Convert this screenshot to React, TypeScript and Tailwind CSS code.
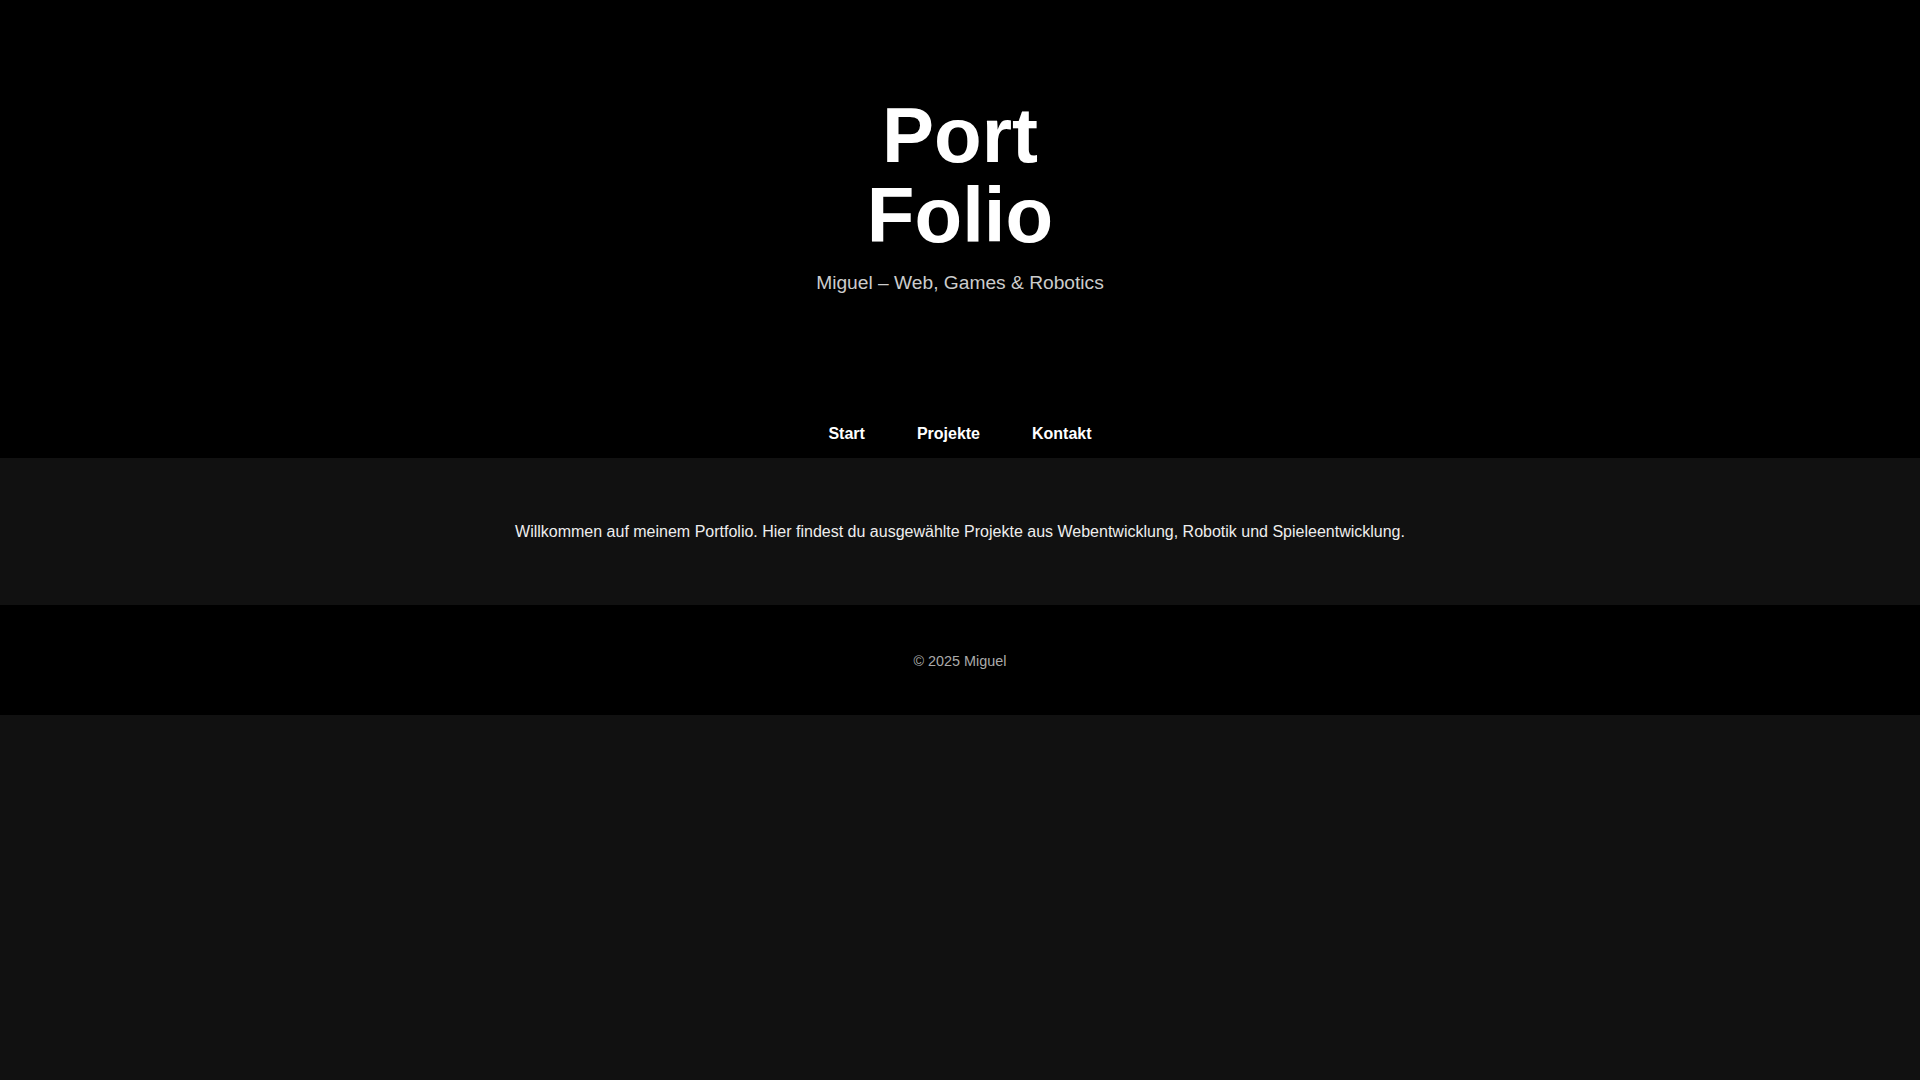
const navItems = ['Start', 'Projekte', 'Kontakt']

export default function App() {
  return (
    <div className="min-h-screen bg-[#111111] font-['Liberation_Sans',Arial,sans-serif] text-[#eeeeee]">
      <header className="bg-black pt-[95px] pb-[15px] text-center">
        <h1 className="text-[78px] font-bold leading-[80px] text-white">
          Port
          <br />
          Folio
        </h1>
        <p className="mt-[17px] text-[19.2px] leading-[22px] text-[#cccccc]">Miguel – Web, Games &amp; Robotics</p>
        <nav className="mt-[131px]">
          <ul className="flex justify-center gap-[52px] leading-[18px]">
            {navItems.map((item) => (
              <li key={item} className="leading-[18px]">
                <a href="#" className="text-base font-bold leading-[18px] text-white">
                  {item}
                </a>
              </li>
            ))}
          </ul>
        </nav>
      </header>

      <main className="bg-[#111111] px-4 pt-[65px] pb-16 text-center">
        <p className="text-base leading-[18px] text-[#eeeeee]">
          Willkommen auf meinem Portfolio. Hier findest du ausgewählte Projekte aus Webentwicklung, Robotik und Spieleentwicklung.
        </p>
      </main>

      <footer className="bg-black pt-[48px] pb-[45px] text-center">
        <p className="text-[14.4px] leading-[17px] text-[#aaaaaa]">© 2025 Miguel</p>
      </footer>
    </div>
  )
}
